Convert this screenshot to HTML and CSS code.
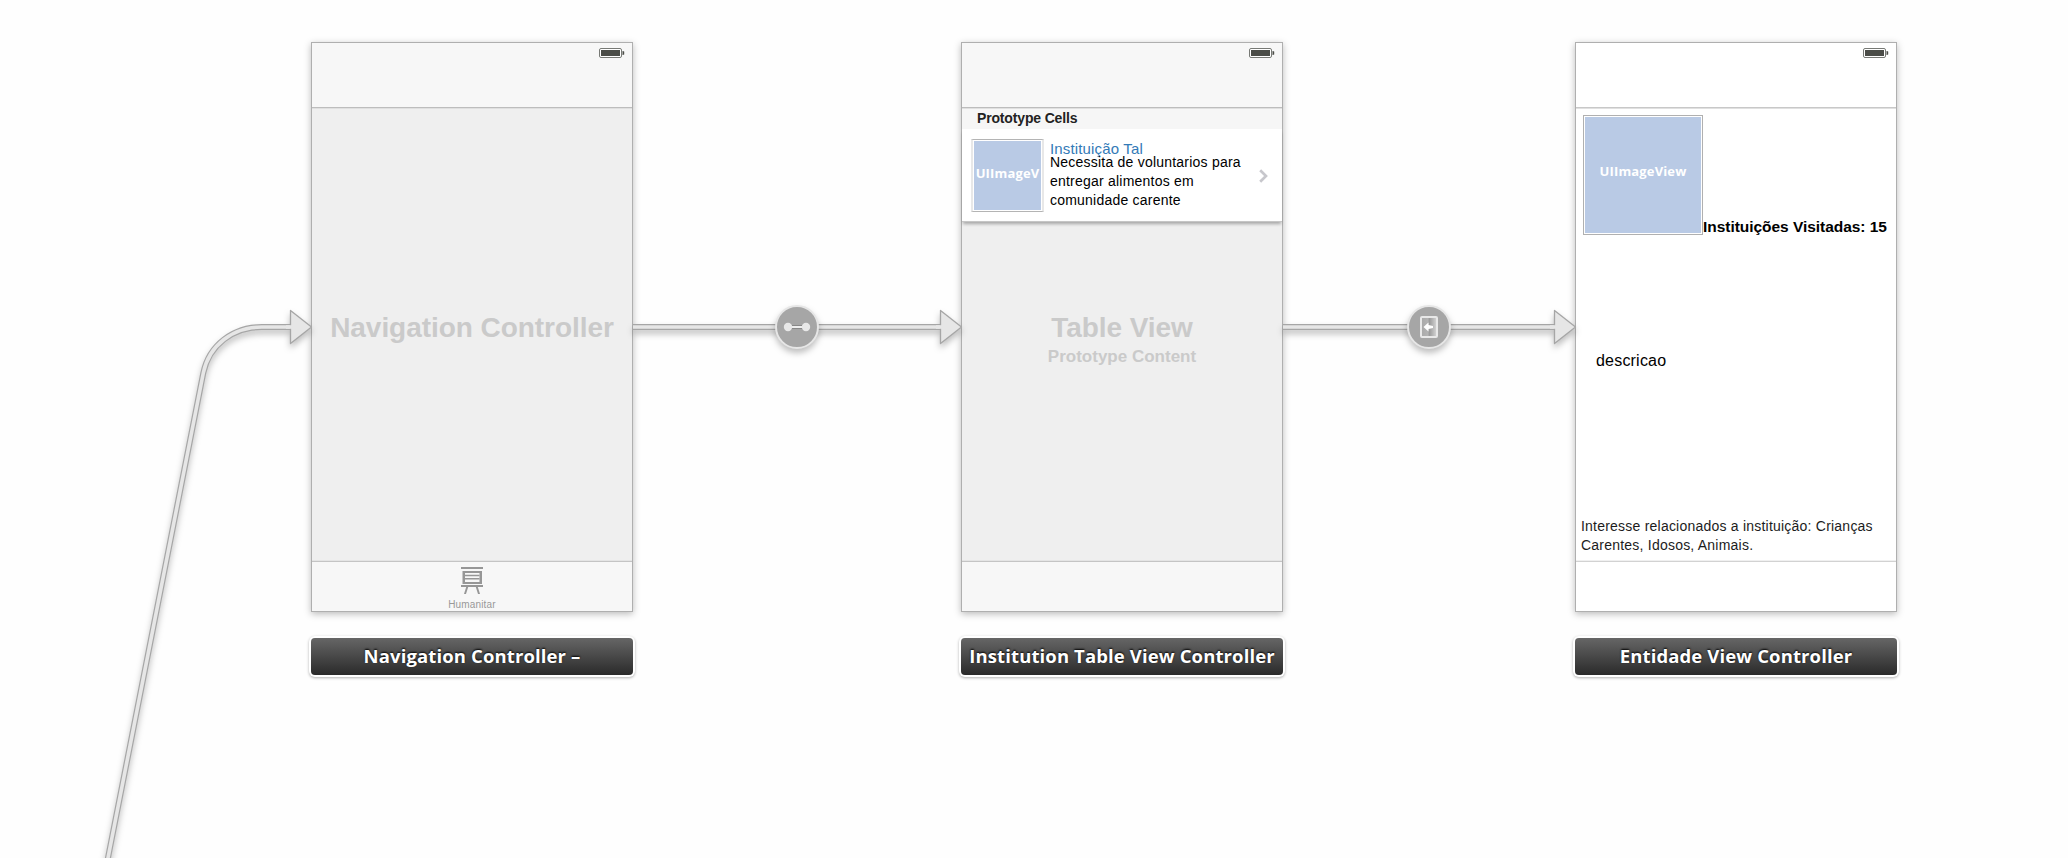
FILE: index.html
```html
<!DOCTYPE html>
<html lang="pt">
<head>
<meta charset="utf-8">
<title>Storyboard</title>
<link rel="stylesheet" href="styles.css">
</head>
<body>
<main class="canvas">
  <section class="scene scene-nav">
    <div class="device">
      <header class="bar bar-top"><svg class="battery" width="26" height="10" viewBox="0 0 26 10"><rect class="b-case" x=".5" y=".5" width="22" height="9" rx="1.5"/><rect class="b-fill" x="2" y="2" width="19" height="6"/><path class="b-fill" d="M23.500 3H24.500v.5h.7v3h-.7V7H23.500z"/></svg></header>
      <div class="body body-center"><h2 class="ghost">Navigation Controller</h2></div>
      <footer class="bar bar-bottom tab">
        <svg class="tab-icon" width="22" height="27" viewBox="0 0 22 27"><path d="M0 0h22v2H0zM0 18h22v2H0z"/><path fill-rule="evenodd" d="M1.500 4h19.500v13H1.500zM4 6v9h14.500V6z"/><path d="M4 7.800h14.500v1.400H4zM4 11h14.500v1.400H4z"/><path d="M5.200 20h2L5 27H3zM16.800 20h-2L17 27h2z"/></svg>
        <span class="tab-text">Humanitar</span>
      </footer>
    </div>
    <div class="label">Navigation Controller –</div>
  </section>

  <section class="scene scene-table">
    <div class="device">
      <header class="bar bar-top"><svg class="battery" width="26" height="10" viewBox="0 0 26 10"><rect class="b-case" x=".5" y=".5" width="22" height="9" rx="1.5"/><rect class="b-fill" x="2" y="2" width="19" height="6"/><path class="b-fill" d="M23.500 3H24.500v.5h.7v3h-.7V7H23.500z"/></svg></header>
      <div class="body">
        <div class="section-head">Prototype Cells</div>
        <div class="cell">
          <div class="image image-small"><span>UIImageV</span></div>
          <div class="cell-text">
            <div class="cell-title">Instituição Tal</div>
            <p class="cell-copy">Necessita de voluntarios para<br>entregar alimentos em<br>comunidade carente</p>
          </div>
          <svg class="chevron" width="9" height="14" viewBox="0 0 9 14"><path d="M1.200 1.200 7 7l-5.800 5.800"/></svg>
        </div>
        <div class="ghosts">
          <h2 class="ghost">Table View</h2>
          <p class="ghost-sub">Prototype Content</p>
        </div>
      </div>
      <footer class="bar bar-bottom"></footer>
    </div>
    <div class="label">Institution Table View Controller</div>
  </section>

  <section class="scene scene-entity">
    <div class="device device-white">
      <header class="bar bar-top"><svg class="battery" width="26" height="10" viewBox="0 0 26 10"><rect class="b-case" x=".5" y=".5" width="22" height="9" rx="1.5"/><rect class="b-fill" x="2" y="2" width="19" height="6"/><path class="b-fill" d="M23.500 3H24.500v.5h.7v3h-.7V7H23.500z"/></svg></header>
      <div class="body">
        <div class="profile">
          <div class="image image-large"><span>UIImageView</span></div>
          <div class="visits">Instituições Visitadas: 15</div>
        </div>
        <div class="description">descricao</div>
        <p class="interests">Interesse relacionados a instituição: Crianças<br>Carentes, Idosos, Animais.</p>
      </div>
      <footer class="bar bar-bottom"></footer>
    </div>
    <div class="label">Entidade View Controller</div>
  </section>

  <svg class="segues" width="2068" height="858" viewBox="0 0 2068 858">
    <defs>
      <linearGradient id="door" x1="0" x2="1" y1="0" y2="0"><stop offset="0" stop-color="#a8a8a8"/><stop offset=".45" stop-color="#b4b4b4"/><stop offset=".5" stop-color="#989898"/><stop offset="1" stop-color="#d8d8d8"/></linearGradient>
    </defs>
    <g class="segue">
      <path class="wire-edge" d="M106 868L203.300 373C209 345 233 327 262 327H291"/>
      <path class="wire" d="M106 868L203.300 373C209 345 233 327 262 327H291"/>
      <path class="head" d="M290.500 310.500L311.500 327L290.500 343.500z"/>
      <path class="wire" d="M286 327H292"/>
    </g>
    <g class="segue">
      <path class="wire-edge" d="M633 327H940"/><path class="wire" d="M633 327H940"/>
      <path class="head" d="M940.500 310.500L961.500 327L940.500 343.500z"/>
      <path class="wire" d="M936 327H942"/>
    </g>
    <g class="segue">
      <path class="wire-edge" d="M1283 327H1554"/><path class="wire" d="M1283 327H1554"/>
      <path class="head" d="M1554.500 310.500L1575.500 327L1554.500 343.500z"/>
      <path class="wire" d="M1550 327H1556"/>
    </g>
    <g class="segue">
      <circle class="node" cx="797" cy="327" r="21"/>
      <path class="link-edge" d="M788 327H806"/><path class="link" d="M788 327H806"/>
      <circle class="dot" cx="788" cy="327" r="4.200"/><circle class="dot" cx="806" cy="327" r="4.200"/>
    </g>
    <g class="segue">
      <circle class="node" cx="1429" cy="327" r="21"/>
      <rect class="door" x="1421" y="317" width="16" height="20" rx="1"/>
      <path class="door-arrow" d="M1423.500 327l5-4.500v2.500l4.500 1v2l-4.500 1v2.500z"/>
    </g>
  </svg>
</main>
</body>
</html>
```
FILE: styles.css
```css
* { box-sizing: border-box; }
body {
  margin: 0;
  background: #fefefe;
  font-family: "Liberation Sans", Arial, sans-serif;
  color: #000;
}
h2, p { margin: 0; }
.canvas { position: relative; width: 2068px; height: 858px; overflow: hidden; }
.scene {
  position: absolute;
  top: 42px;
  width: 322px;
  display: flex;
  flex-direction: column;
  gap: 26px;
}
.scene-nav { left: 311px; }
.scene-table { left: 961px; }
.scene-entity { left: 1575px; }
.segues { position: absolute; left: 0; top: 0; }

.device {
  height: 570px;
  display: flex;
  flex-direction: column;
  border: 1px solid #afafaf;
  background: #efefef;
  box-shadow: 0 2px 7px rgba(0, 0, 0, .27);
}
.device-white { background: #fff; }
.bar { flex: none; background: #f7f7f7; }
.device-white .bar { background: #fff; }
.bar-top {
  height: 65px;
  border-bottom: 1px solid #bdbdbd;
  box-shadow: 0 1px 0 #e0e0e0;
  display: flex;
  justify-content: flex-end;
  padding: 5px 7px 0 0;
}
.bar-bottom { height: 50px; border-top: 1px solid #c4c4c4; box-shadow: 0 -1px 0 #e4e4e4; }
.device-white .bar-bottom { border-top-color: #d2d2d2; box-shadow: 0 -1px 0 #f0f0f0; }
.device-white .bar-top { border-bottom-color: #c8c8c8; }
.b-case { fill: #fff; stroke: #777975; }
.b-fill { fill: #4b4d48; }
.body { flex: 1; min-height: 0; display: flex; flex-direction: column; }
.body-center { align-items: center; padding-top: 204px; }
.ghost { font-size: 28px; line-height: 32px; letter-spacing: -.05px; color: #cacaca; white-space: nowrap; }
.ghost-sub { font-size: 17px; line-height: 20px; font-weight: bold; color: #cacaca; margin-top: 3px; }
.ghosts { display: flex; flex-direction: column; align-items: center; margin-top: 90px; }

.tab { display: flex; flex-direction: column; align-items: center; padding-top: 5px; }
.tab-icon { flex: none; fill: #969696; }
.tab-text { font-size: 10px; line-height: 12px; letter-spacing: .15px; color: #999; margin-top: 5px; }

.section-head {
  height: 20px;
  padding-left: 15px;
  margin-top: 1px;
  background: #f6f6f6;
  font-size: 14px;
  line-height: 19px;
  letter-spacing: -.16px;
  font-weight: bold;
  color: #222;
}
.cell {
  height: 93px;
  display: flex;
  background: #fff;
  border-bottom: 1px solid #c6c6c6;
  box-shadow: 0 3px 3px -1px rgba(0, 0, 0, .3);
  padding: 10px 14px 0 9px;
}
.image {
  flex: none;
  display: flex;
  justify-content: center;
  overflow: hidden;
  background: #b9cae5;
  color: #fff;
  font: bold 13px/16px "Open Sans", "Noto Sans", sans-serif;
  letter-spacing: .15px;
}
.image-small {
  width: 73px;
  height: 73px;
  border: 2px solid #e8e8e8;
  border-top: 1px solid #b4b4b4;
  border-bottom: 1px solid #b4b4b4;
  box-shadow: inset 0 0 0 1px #fff;
  padding-top: 25px;
}
.image-large {
  width: 120px;
  height: 120px;
  border: 1px solid #b0b0b0;
  box-shadow: inset 0 0 0 1px #fff;
  padding-top: 47px;
}
.cell-text { flex: 1; padding: 1px 0 0 6px; white-space: nowrap; }
.cell-title { font-size: 15px; line-height: 17px; letter-spacing: .15px; color: #337ab7; }
.cell-copy { font-size: 14px; line-height: 19px; letter-spacing: .22px; margin-top: -4px; }
.chevron { margin-top: 30px; fill: none; stroke: #c7c7cc; stroke-width: 2.700; }

.profile { display: flex; align-items: flex-end; padding: 7px 0 0 7px; }
.visits { font-size: 15.500px; line-height: 18px; letter-spacing: -.04px; font-weight: bold; white-space: nowrap; margin-bottom: -1px; }
.description { font-size: 16px; line-height: 20px; letter-spacing: .2px; padding-left: 20px; margin-top: 116px; }
.interests { font-size: 14px; line-height: 19px; letter-spacing: .22px; color: #1c1c1c; padding-left: 5px; margin-top: auto; margin-bottom: 6px; }

.label {
  height: 37px;
  border-radius: 4px;
  background: linear-gradient(#666, #2a2a2a);
  box-shadow: 0 0 0 2px #fff, 0 1px 3px 2px rgba(0, 0, 0, .3);
  color: #fff;
  text-align: center;
  white-space: nowrap;
  font: bold 18.500px/35px "Open Sans", "Noto Sans", sans-serif;
  letter-spacing: .12px;
  text-shadow: 0 -1px 2px #000;
}

.segue { filter: drop-shadow(0 4px 3px rgba(0, 0, 0, .25)); }
.wire-edge { fill: none; stroke: #a6a6a6; stroke-width: 6; }
.wire { fill: none; stroke: #e6e6e6; stroke-width: 3.600; }
.head { fill: #e6e6e6; stroke: #a6a6a6; stroke-width: 1.300; stroke-linejoin: round; }
.node { fill: #a6a6a6; stroke: #e6e6e6; stroke-width: 2; }
.link-edge { stroke: #888; stroke-width: 4; }
.link { stroke: #eee; stroke-width: 2; }
.dot { fill: #e8e8e8; }
.door { fill: url(#door); stroke: #e8e8e8; stroke-width: 2; }
.door-arrow { fill: #fff; }
```
